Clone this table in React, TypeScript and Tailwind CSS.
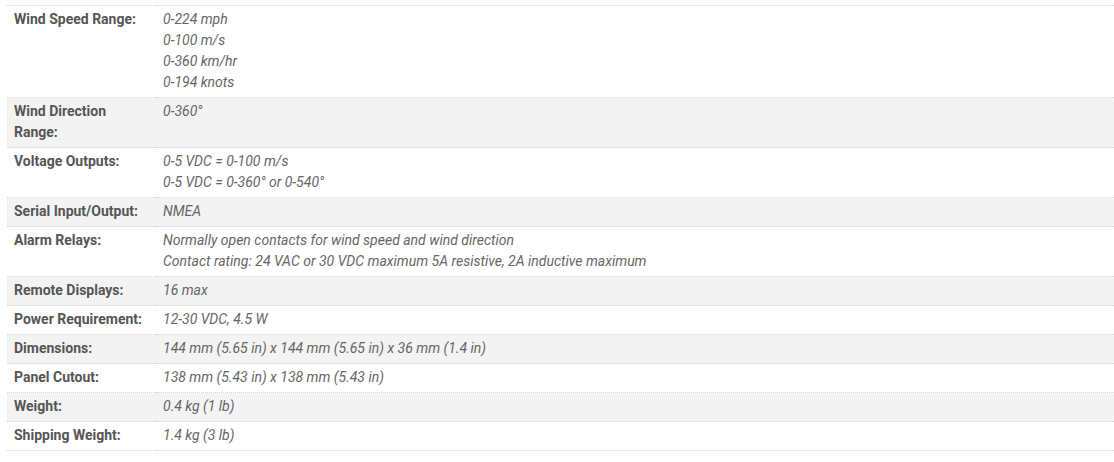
import React from "react";

const rows: [string, string[]][] = [
  ["Wind Speed Range:", ["0-224 mph", "0-100 m/s", "0-360 km/hr", "0-194 knots"]],
  ["Wind Direction Range:", ["0-360°"]],
  ["Voltage Outputs:", ["0-5 VDC = 0-100 m/s", "0-5 VDC = 0-360° or 0-540°"]],
  ["Serial Input/Output:", ["NMEA"]],
  ["Alarm Relays:", ["Normally open contacts for wind speed and wind direction", "Contact rating: 24 VAC or 30 VDC maximum 5A resistive, 2A inductive maximum"]],
  ["Remote Displays:", ["16 max"]],
  ["Power Requirement:", ["12-30 VDC, 4.5 W"]],
  ["Dimensions:", ["144 mm (5.65 in) x 144 mm (5.65 in) x 36 mm (1.4 in)"]],
  ["Panel Cutout:", ["138 mm (5.43 in) x 138 mm (5.43 in)"]],
  ["Weight:", ["0.4 kg (1 lb)"]],
  ["Shipping Weight:", ["1.4 kg (3 lb)"]],
];

export default function App() {
  return (
    <div className="bg-white w-[1114px] h-[462px] pt-[5px] pl-[7px] font-['Roboto',sans-serif] text-[14px] leading-[21px]">
      <table className="w-[1107px] table-fixed border-collapse border-b border-dotted border-[#d4d4d4]">
        <colgroup>
          <col className="w-[149px]" />
          <col />
        </colgroup>
        <tbody>
          {rows.map(([label, vals], i) => (
            <tr key={label} className={`border-t border-dotted border-[#d4d4d4] ${i % 2 === 1 ? "bg-[#f3f3f3]" : "bg-white"}`}>
              <td className="align-top pl-[7px] pr-[7px] pt-[3px] pb-[4px] font-bold text-[#555555]">
                {label}
              </td>
              <td className="align-top pl-[7px] pt-[3px] pb-[4px] italic text-[#666666]">
                {vals.map((v) => (
                  <div key={v}>{v}</div>
                ))}
              </td>
            </tr>
          ))}
        </tbody>
      </table>
    </div>
  );
}
